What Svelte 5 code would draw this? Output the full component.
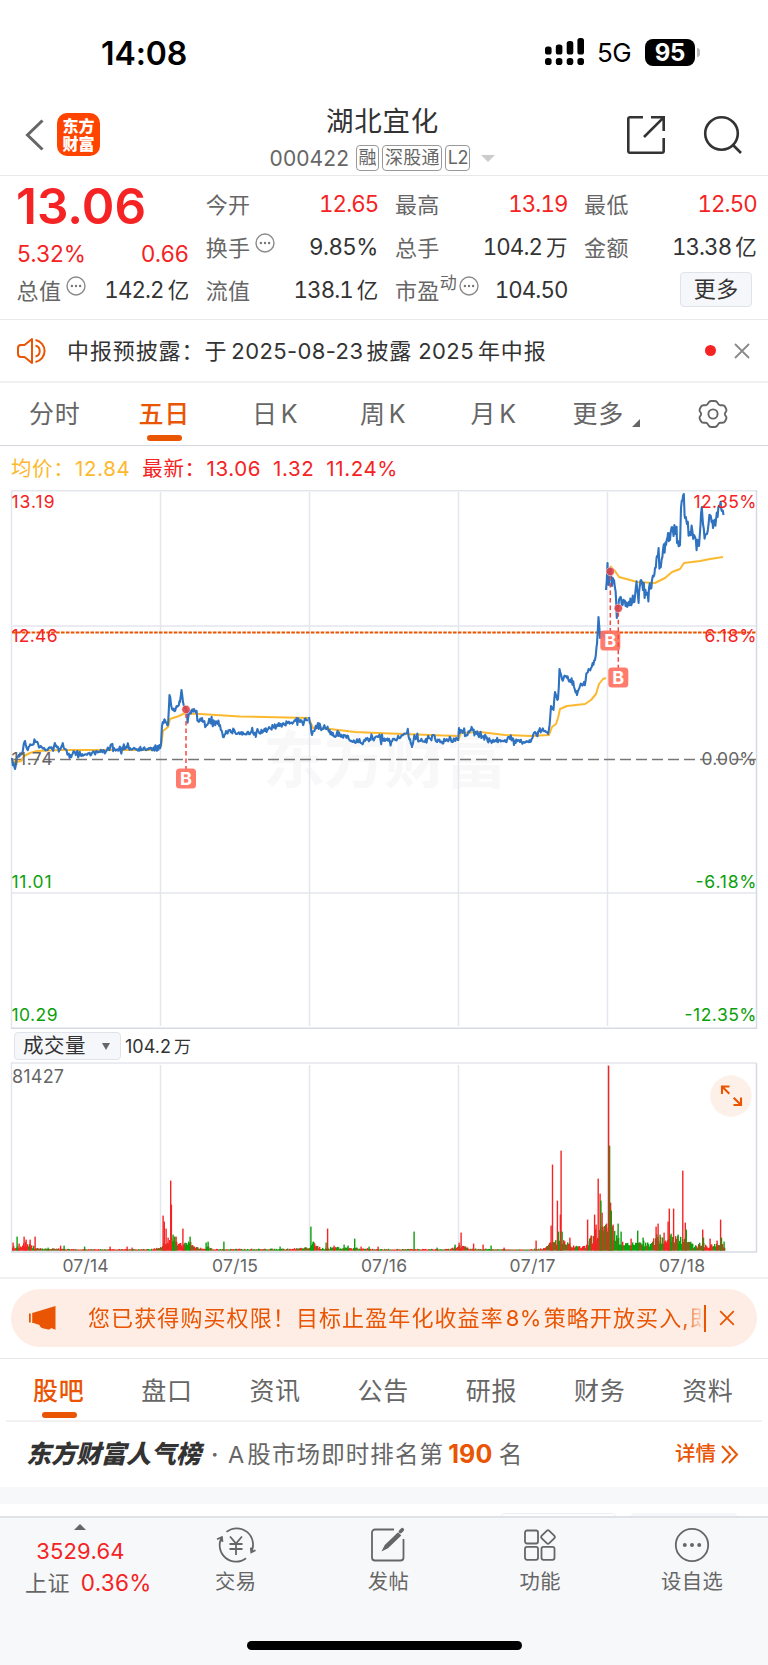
<script>
  let seed = 7;
  const rnd = () => {
    seed = (seed * 16807) % 2147483647;
    return seed / 2147483647;
  };

  // Closing price key points, one list per trading day
  const priceDays = [
    [[12,758],[15,769],[17,757],[22,754],[24,743],[25,741],[27,749],[32,745],[35,741],[40,747],[46,750],[50,748],[58,747],[65,749],[68,754],[75,752],[84,755],[92,753],[100,752],[107,750],[110,748],[115,750],[130,748],[145,749],[160,749]],
    [[160,749],[161,744],[162,726],[165,720],[168,725],[169.5,695],[172,709],[175,711],[178,706],[180,702],[181.5,690],[183,702],[186,710],[188,719],[190,712],[195,711],[198,721],[202,718],[206,726],[212,722],[220,725],[223,737],[226,731],[235,732],[245,734],[255,733],[265,731],[270,728],[280,725],[290,723],[295,720],[300,722],[308,720]],
    [[309,717],[312,735],[315,729],[318,723],[322,729],[328,729],[332,735],[340,736],[348,736],[353,742],[365,741],[378,737],[385,741],[395,740],[402,735],[407,733],[410,739],[412,747],[415,738],[425,742],[433,735],[437,742],[445,741],[457,740]],
    [[458,741],[459,728],[461,730],[466,735],[472,728],[475,732],[482,736],[490,741],[500,740],[510,739],[520,742],[530,742],[535,732],[542,730],[548,734],[550,720],[551,706],[553.5,710],[555,692],[558,699],[559.5,669],[562,679],[566,676],[570,680],[574,687],[577,695],[580,686],[584,682],[587,673],[591,668],[595,660],[597,644],[598.5,617],[600,638],[602,632],[605,640]],
    [[606,590],[607.5,563],[609,585],[610,568],[612,586],[614,580],[616,598],[617.5,611],[619,600],[621,598],[624,601],[628,605],[632,603],[635,596],[637,588],[639,593],[641,580],[643,590],[646,595],[649,588],[652,580],[655,568],[657,556],[660,567],[663,550],[666,545],[668,533],[670,540],[672,527],[675,529],[677,543],[680,545],[681,508],[683,496],[685,518],[687,524],[690,532],[695,537],[699,546],[701,514],[703,524],[707,534],[710,515],[713,528],[716,520],[719,506],[722,511],[723.5,515]]
  ];
  const noise = [2.6, 3, 3, 3, 7];

  const avgDays = [
    [[12,760],[16,762],[21,761],[24,756],[30,753],[37,751],[60,750],[158,750]],
    [[161,747],[163,731],[168,727],[170,719],[179,716],[184,713.5],[200,714],[240,716.5],[308,718]],
    [[309,719],[313,728],[330,729],[355,732],[390,733.5],[430,735],[457,736]],
    [[458,741],[461,733],[480,732],[505,735],[530,736],[549,735],[552,727],[556,724],[558,718],[560,709],[567,706],[585,704],[591,700],[596,694],[599,684],[603,679],[606,678]],
    [[610,566],[615,571],[619,577],[630,580],[637,582],[655,583],[665,578],[672,572],[680,569],[684,563],[700,561],[710,559],[723,557]]
  ];

  function at(keys, x) {
    for (let i = 1; i < keys.length; i++) {
      const [x0, y0] = keys[i - 1];
      const [x1, y1] = keys[i];
      if (x <= x1) return y0 + ((y1 - y0) * (x - x0)) / (x1 - x0);
    }
    return keys[keys.length - 1][1];
  }

  function wiggle(keys, amp) {
    const pts = [keys[0]];
    for (let i = 1; i < keys.length; i++) {
      const [x0] = keys[i - 1];
      const [x1, y1] = keys[i];
      for (let x = x0 + 0.8; x < x1 - 0.3; x += 0.8) {
        const big = rnd() < 0.18 ? 2 : 0.8;
        pts.push([x, at(keys, x) + (rnd() - 0.5) * amp * 2 * big]);
      }
      pts.push([x1, y1]);
    }
    return pts.map(([x, y]) => `${x.toFixed(1)},${y.toFixed(1)}`).join(' ');
  }

  const priceLines = priceDays.map((d, i) => wiggle(d, noise[i]));
  const avgLines = avgDays.map((d) => d.map((p) => p.join(',')).join(' '));

  // Background volume level, then the bars that stand out of it
  const volLevel = [[12,4],[16,5],[20,3],[24,8],[34,4],[42,2],[60,2],[80,1.2],[150,1.5],[160,3],[163,10],[168,10],[174,13],[178,6],[184,7],[189,9],[194,4],[204,2.5],[209,4],[214,1.5],[290,1.8],[306,3],[309,4],[312,9],[316,5],[322,2.5],[335,3.5],[360,2.5],[380,1.5],[450,1.5],[458,5],[464,4],[470,2],[495,1.5],[530,1.2],[546,3],[550,8],[556,10],[564,9],[572,5],[578,4],[585,4],[588,10],[593,14],[598,24],[604,22],[608,22],[612,22],[617,15],[622,8],[630,6],[640,10],[650,6],[656,14],[662,12],[668,14],[675,15],[684,14],[690,8],[695,4],[701,9],[708,4],[716,7],[724,6]];
  const peaks = [
    [13,8,'r'],[17,14,'g'],[19,7,'r'],[24,14,'r'],[26,11,'r'],[30,11,'r'],[35,14,'r'],[48,3,'g'],[60.5,5,'r'],[64,5,'g'],[84.5,4,'g'],[110,4,'r'],[127,4,'r'],[132,3,'r'],
    [163,35,'r'],[164.2,29,'r'],[166,22,'r'],[168,13,'r'],[171.3,46,'r'],[170.6,70,'r'],[173,16,'g'],[174.5,14,'g'],[176,14,'r'],[182.8,22,'r'],[185,8,'g'],[190,14,'g'],[206,8,'g'],[208,9,'g'],[223.8,9,'g'],[280,4,'g'],
    [310.8,24,'g'],[313,9,'g'],[326,8,'g'],[327.5,22,'r'],[334,5,'r'],[344,6,'g'],[348,5,'g'],[354.6,12,'g'],[361,4,'r'],[369,4,'g'],[378,4,'r'],[414,19,'g'],[437,3,'g'],
    [455,6,'g'],[459,8,'r'],[461,18,'r'],[473.5,7,'r'],[483,6,'r'],[491,5,'g'],[504,3,'r'],[536,10,'r'],[551,25,'r'],[552.4,86,'r'],[557.3,50,'r'],[558.3,19,'g'],[560.3,36,'r'],[561,100,'r'],[562,19,'g'],[569.8,13,'r'],[587.5,31,'r'],[591,15,'r'],[594.5,36,'r'],[596,26,'r'],[598.1,72,'r'],[600,57,'r'],[600.8,50,'g'],[602,38,'r'],[604,24,'r'],[606.5,27,'r'],[610.5,48,'r'],[611.2,40,'g'],[609.5,105,'g'],[608.5,185,'r'],[613,26,'r'],[618,27,'g'],[621,19,'g'],[631,12,'r'],[637.6,20,'g'],[643,13,'g'],[656,24,'r'],[658,27,'r'],[660,16,'g'],[664,18,'r'],[668,29,'r'],[669.2,42,'r'],[671,17,'g'],[673.5,42,'r'],[678,16,'g'],[682.7,80,'r'],[685.2,28,'r'],[686.2,21,'g'],[702.6,21,'r'],[703.4,13,'g'],[710,12,'r'],[717,10,'r'],[720.5,31,'r'],[721.4,13,'g'],[724,9,'g']
  ];
  // Stretches where selling dominates
  const heavyGreen = [[172, 178], [187, 192], [310, 318], [600, 605], [610, 652], [675, 694]];
  const BASE = 1250.6;
  const volBars = [];
  for (let x = 12.6; x < 725.5; x += 1) {
    const lv = at(volLevel, x);
    const green = heavyGreen.some(([a, b]) => x >= a && x <= b) ? 0.78 : 0.45;
    volBars.push([x, Math.max(1, lv * (0.45 + rnd() * 0.75)), rnd() < green ? 'g' : 'r']);
  }
  volBars.push(...peaks);

  const cols = [160.5, 309.5, 458.5, 607.5];
  const dates = [['07/14', 85.5], ['07/15', 235], ['07/16', 384], ['07/17', 532.5], ['07/18', 682]];
  const marks = [
    { x: 186, y: 709.5, by: 778 },
    { x: 610.3, y: 571.5, by: 640 },
    { x: 618.3, y: 608.3, by: 677 }
  ];
  const stats = [
    [{ k: '今开', v: '12.65', up: true }, { k: '换手', v: '9.85%', info: true, wide: true }, { k: '流值', v: '138.1', unit: '亿' }],
    [{ k: '最高', v: '13.19', up: true }, { k: '总手', v: '104.2', unit: '万' }, { k: '市盈', v: '104.50', info: true, sup: '动' }],
    [{ k: '最低', v: '12.50', up: true }, { k: '金额', v: '13.38', unit: '亿' }, { more: true }]
  ];
  const lower = ['股吧', '盘口', '资讯', '公告', '研报', '财务', '资料'];
</script>

{#snippet dots()}
  <svg class="dots" width="20" height="20" viewBox="0 0 20 20">
    <circle cx="10" cy="10" r="9" fill="none" stroke="#8b8b8b" stroke-width="1.4" />
    <g fill="#777"><circle cx="5.9" cy="10" r="1.2" /><circle cx="10" cy="10" r="1.2" /><circle cx="14.1" cy="10" r="1.2" /></g>
  </svg>
{/snippet}

<main>
  <div class="status">
    <span class="time">14:08</span>
    <svg class="signal" width="40" height="28" viewBox="0 0 40 28">
      <rect x="0" y="8.5" width="6.6" height="8" rx="2.6" /><rect x="10.8" y="6.5" width="6.6" height="10" rx="2.6" />
      <rect x="21.7" y="3" width="6.6" height="13.5" rx="2.6" /><rect x="32.4" y="0" width="6.6" height="16.5" rx="2.6" />
      {#each [0, 10.8, 21.7, 32.4] as x}<rect {x} y="20" width="6.6" height="7" rx="2.8" />{/each}
    </svg>
    <span class="net">5G</span>
    <span class="battery">95</span>
    <span class="nub"></span>
  </div>

  <header>
    <svg class="back" width="20" height="32" viewBox="0 0 20 32"><path d="M17.5 1.5 2.5 16l15 14.5" fill="none" stroke="#666" stroke-width="3" /></svg>
    <div class="logo"><span>东方</span><span>财富</span></div>
    <div class="title">
      <h1>湖北宜化</h1>
      <div class="sub"><span class="code">000422</span><i>融</i><i>深股通</i><i>L2</i><b></b></div>
    </div>
    <svg class="share" width="40" height="40" viewBox="0 0 40 40" fill="none" stroke="#333" stroke-width="2.6">
      <path d="M17 2.3H3.8a1.5 1.5 0 0 0-1.5 1.5v32.4a1.5 1.5 0 0 0 1.5 1.5h32.4a1.5 1.5 0 0 0 1.5-1.5V23" /><path d="M25 2.3h12.7V16M37.2 2.8 18 22" />
    </svg>
    <svg class="search" width="40" height="40" viewBox="0 0 40 40" fill="none" stroke="#333" stroke-width="2.6">
      <circle cx="18.5" cy="18.5" r="16.3" /><path d="m30 30 8 8" />
    </svg>
  </header>

  <section class="quote">
    <div class="col first">
      <div class="price">13.06</div>
      <div class="chg"><span>5.32%</span><span>0.66</span></div>
      <div class="row"><span class="k">总值</span>{@render dots()}<span class="v">142.2<u>亿</u></span></div>
    </div>
    {#each stats as col}
      <div class="col">
        {#each col as s}
          <div class="row">
            {#if s.more}
              <button>更多</button>
            {:else}
              <span class="k">{s.k}</span>{#if s.sup}<span class="sup">{s.sup}</span>{/if}{#if s.info}{@render dots()}{/if}
              <span class="v" class:up={s.up} class:wide={s.wide}>{s.v}{#if s.unit}<u>{s.unit}</u>{/if}</span>
            {/if}
          </div>
        {/each}
      </div>
    {/each}
  </section>

  <section class="notice">
    <svg width="32" height="28" viewBox="0 0 32 28" fill="none" stroke="#ea5504" stroke-width="2">
      <path d="M15 2v24L7.5 20H4a3 3 0 0 1-3-3v-6a3 3 0 0 1 3-3h3.5Z" stroke-linejoin="round" />
      <path d="M18.5 8.5a5.7 5.7 0 0 1 0 11M18.5 3a11.2 11.2 0 0 1 0 22" />
    </svg>
    <p>中报预披露：<span>于</span><span class="n">2025-08-23</span>披露<span class="n year">2025</span>年中报</p>
    <em></em>
    <svg class="x" width="16" height="16" viewBox="0 0 16 16" stroke="#8a8a8a" stroke-width="1.8"><path d="m1 1 14 14m0-14-14 14" /></svg>
  </section>

  <nav class="periods">
    <span>分时</span><span class="on">五日</span><span>日<u>K</u></span><span>周<u>K</u></span><span>月<u>K</u></span><span class="morep">更多<b></b></span>
    <svg width="32" height="30" viewBox="0 0 32 30" fill="none" stroke="#666" stroke-width="1.9" stroke-linejoin="round">
      <path d="M12 3Q13 2 14.5 2h3Q19 2 20 3l1.5 2.2q.7 1 2 1h2q1.7 0 2.4 1.3l1.2 2.2q.8 1.5 0 2.800l-.9 1.300q-.7 1.200 0 2.400l.9 1.300q.8 1.300 0 2.800l-1.200 2.200q-.7 1.300-2.400 1.300h-2q-1.300 0-2 1L20 27q-1 1-2.500 1h-3Q13 28 12 27l-1.500-2.200q-.7-1-2-1h-2q-1.700 0-2.400-1.300l-1.200-2.200q-.8-1.500 0-2.800l.9-1.300q.7-1.200 0-2.400l-.9-1.300q-.8-1.300 0-2.800l1.200-2.200q.7-1.300 2.400-1.300h2q1.300 0 2-1Z" />
      <circle cx="16" cy="15" r="4.6" />
    </svg>
  </nav>

  <div class="legend"><span class="avg">均价：<s>12.84</s></span><span>最新：<s>13.06</s></span><span>1.32</span><span>11.24%</span></div>

  <svg class="chart" width="768" height="540" viewBox="0 490 768 540">
    <text class="wm" x="263" y="783" textLength="244">东方财富</text>
    <g stroke="#e3e6ed" stroke-width="1.5" fill="none">
      <path d="M11.5 490.7H756.5M11.5 626H756.5M11.5 893H756.5" />
      {#each cols as x}<path d="M{x} 492V1026" />{/each}
      <path d="M11.5 490V1028" /><path d="M756.5 490V1028.3H11" stroke="#d7dae4" />
    </g>
    <path d="M12 759.5H756" stroke="#777" stroke-width="1.5" stroke-dasharray="11 5" />
    <path d="M12 632.5H756" stroke="#ea5504" stroke-width="1.9" stroke-dasharray="3.6 1.3" />
    {#each avgLines as p}<polyline points={p} fill="none" stroke="#fdb92e" stroke-width="2" stroke-linejoin="round" />{/each}
    {#each priceLines as p}<polyline points={p} fill="none" stroke="#2e72c0" stroke-width="2.1" stroke-linejoin="round" />{/each}
    {#each marks as m}
      <path d="M{m.x} {m.y + 4}V{m.by - 9}" stroke="#f5483c" stroke-width="1.5" stroke-dasharray="4.5 3" />
      <circle cx={m.x} cy={m.y} r="4.2" fill="#e04448" fill-opacity=".9" stroke="#fff" stroke-opacity=".5" />
      <rect x={m.x - 10} y={m.by - 9.5} width="20" height="20" rx="3.5" fill="#ff7262" fill-opacity=".93" />
      <text class="b" x={m.x} y={m.by + 7} text-anchor="middle">B</text>
    {/each}
    <g class="lab">
      <text class="r" x="11.5" y="508" textLength="43">13.19</text><text class="r" x="11.5" y="642" textLength="46">12.46</text>
      <text x="11.5" y="764.5" textLength="41">11.74</text><text class="g" x="11.5" y="887.5" textLength="40">11.01</text><text class="g" x="11.5" y="1020.7" textLength="46">10.29</text>
      <g text-anchor="end">
        <text class="r" x="756.5" y="508" textLength="63">12.35%</text><text class="r" x="756.5" y="642" textLength="52">6.18%</text><text x="756.5" y="764.5" textLength="55">0.00%</text>
        <text class="g" x="756.5" y="887.5" textLength="61">-6.18%</text><text class="g" x="756.5" y="1020.7" textLength="72">-12.35%</text>
      </g>
    </g>
  </svg>

  <div class="selector"><div class="pick">成交量<b></b></div><span>104.2<u>万</u></span></div>

  <div class="volume">
    <svg class="chart" width="768" height="214" viewBox="0 1062 768 214">
      <g stroke="#e3e6ed" stroke-width="1.5" fill="none">
        <path d="M11.5 1252V1063H756.5" />
        {#each cols as x}<path d="M{x} 1065V1250" />{/each}
        <path d="M756.5 1063V1252H11" stroke="#d7dae4" />
      </g>
      {#each volBars as [x, h, c]}<rect x={x - 0.6} y={BASE - h} width="1.4" height={h} fill={c === 'r' ? '#f52323' : '#0c9f0c'} />{/each}
      <g class="lab">
        <text x="12" y="1083" textLength="52" style:font-size="18px">81427</text>
        {#each dates as [d, x]}<text {x} y="1272" text-anchor="middle" textLength="46">{d}</text>{/each}
      </g>
    </svg>
    <svg class="expand" width="42" height="42" viewBox="0 0 42 42">
      <circle cx="21" cy="21" r="20.7" fill="#fdf0e9" />
      <path d="M12 19v-7.500h7.500M12.300 11.800l7 7M31 22.500V30h-7.500M30.700 29.700l-7-7" fill="none" stroke="#ea5504" stroke-width="2.100" />
    </svg>
  </div>

  <div class="bannerwrap">
    <div class="banner">
      <svg width="28" height="24" viewBox="0 0 28 24" fill="#ea5504"><path d="M0 7.500h1.800v9H0zM3.200 7v10H4.500l6 2q.5 3.500 7 4 3.500 1.500 4.500-1l4.500 1.800V0L5 6.500Z" /></svg>
      <p>您已获得购买权限！目标止盈年化收益率<span>8%</span>策略开放买入,即</p>
      <hr />
      <svg width="16" height="16" viewBox="0 0 16 16" stroke="#ea5504" stroke-width="1.8"><path d="m1.200 1.200 13.600 13.600m0-13.600L1.200 14.800" /></svg>
    </div>
  </div>

  <nav class="lower">
    {#each lower as t, i}<span class:on={i === 0}>{t}</span>{/each}
  </nav>

  <section class="rank">
    <strong>东方财富人气榜</strong><span class="dot">·</span><span class="desc"><u>A</u>股市场即时排名第</span><b>190</b><span class="desc">名</span>
    <a>详情<svg width="18" height="19" viewBox="0 0 18 19" fill="none" stroke="#ea5504" stroke-width="2"><path d="m1 1 8 8.500L1 18M8 1l8 8.500L8 18" /></svg></a>
  </section>
  <div class="band"></div>
  <div class="peek"><i></i><i></i></div>

  <footer>
    <div class="index">
      <b></b>
      <div class="pts">3529.64</div>
      <div class="line"><span>上证</span><em>0.36%</em></div>
    </div>
    <div class="tab">
      <svg width="40" height="36" viewBox="0 0 40 36" fill="none" stroke="#666" stroke-width="1.8">
        <path d="M10.500 4.900A16.300 16.300 0 0 1 35.300 24.900M30 31.200A16.300 16.300 0 0 1 5.700 10.500M1 12.300l4.900-2.300.6 4.800M39.500 23.300l-4.200 2-.5-4.600" />
        <path d="m14 9.500 6 7 6-7M13.500 17h13M13.500 22h13M20 16.500V28" />
      </svg>
      <span>交易</span>
    </div>
    <div class="tab">
      <svg width="36" height="36" viewBox="0 0 36 36" fill="none" stroke="#666" stroke-width="1.8">
        <path d="M24 2.500H5a3 3 0 0 0-3 3v25a3 3 0 0 0 3 3h25.500a3 3 0 0 0 3-3V12" />
        <path d="m13.500 22.500 2-4L28 6.500l2 2L17.500 20.500Z" fill="#666" /><path d="m30.500 4.500 1.800-1.800" stroke-width="3.600" stroke-linecap="round" />
      </svg>
      <span>发帖</span>
    </div>
    <div class="tab">
      <svg width="32" height="36" viewBox="0 0 32 36" fill="none" stroke="#666" stroke-width="1.8">
        <rect x="1" y="3.5" width="13" height="13" rx="2" /><rect x="1" y="19.8" width="13" height="13" rx="2" /><rect x="17.5" y="19.8" width="13" height="13" rx="2" />
        <rect x="18.7" y="4.7" width="10.6" height="10.6" rx="1.8" transform="rotate(45 24 10)" />
      </svg>
      <span>功能</span>
    </div>
    <div class="tab">
      <svg width="36" height="36" viewBox="0 0 36 36" fill="none" stroke="#666" stroke-width="1.8">
        <circle cx="18" cy="18" r="16.2" /><g fill="#666" stroke="none"><circle cx="10.8" cy="18" r="2" /><circle cx="18" cy="18" r="2" /><circle cx="25.2" cy="18" r="2" /></g>
      </svg>
      <span>设自选</span>
    </div>
    <div class="home"></div>
  </footer>
</main>

<style>
  :global(body) { margin: 0; background: #fff; }
  main { width: 768px; height: 1665px; overflow: hidden; background: #fff; color: #333; font-family: Inter, 'Noto Sans CJK SC', sans-serif; font-size: 22px; line-height: 1; white-space: nowrap; }
  * { box-sizing: border-box; }
  i, em { font-style: normal; }
  u, s, a { text-decoration: none; }
  p, h1 { margin: 0; font-weight: 400; }
  svg { flex: none; display: block; }

  .status { height: 104px; display: flex; align-items: center; padding-left: 101px; color: #000; }
  .time { font-size: 32px; font-weight: 600; width: 444px; letter-spacing: -0.1px; padding-top: 3px; }
  .net { font-size: 26px; margin-left: 12px; width: 48px; letter-spacing: -0.5px; padding-top: 2px; }
  .battery { width: 50px; height: 27px; border-radius: 8px; background: #000; color: #fff; font-size: 24px; line-height: 27px; font-weight: 700; text-align: center; letter-spacing: -0.2px; }
  .nub { width: 3px; height: 9px; margin-left: 2px; border-radius: 0 4px 4px 0; background: #bbb; }

  header { height: 72px; display: flex; align-items: flex-start; padding-left: 25px; border-bottom: 1.5px solid #e8e8e8; }
  .back { margin-top: 15px; }
  .logo { margin: 9px 0 0 12px; width: 43px; height: 43px; border-radius: 10px; background: #ff4400; color: #fff; font-weight: 900; font-size: 16px; display: flex; flex-direction: column; align-items: center; justify-content: center; gap: 2px; }
  .title { width: 527px; padding-left: 38px; display: flex; flex-direction: column; align-items: center; }
  h1 { font-size: 27.5px; line-height: 32px; letter-spacing: 0.8px; padding-top: 1px; }
  .sub { display: flex; align-items: center; height: 26px; margin-top: 8px; color: #666; }
  .code { font-size: 21px; letter-spacing: 0.1px; margin-right: 7px; }
  .sub i { height: 26px; line-height: 23px; border: 1.5px solid #999; border-radius: 4px; padding: 0 1.5px; margin-right: 3px; font-size: 18px; letter-spacing: 0.3px; }
  .sub i:nth-of-type(3) { letter-spacing: -0.5px; }
  .sub b { margin-left: 8px; border: 7px solid transparent; border-top-color: #ccc; border-bottom: 0; }
  .share { margin: 11px 0 0 -1px; }
  .search { margin: 11px 0 0 36.5px; }

  .quote { height: 144px; padding: 7px 12px 0 17px; display: grid; grid-template-columns: repeat(4, 171.7px); column-gap: 17.5px; border-bottom: 1.5px solid #e8e8e8; }
  .row { height: 43px; display: flex; align-items: center; }
  .k { color: #666; font-size: 22px; letter-spacing: 0.4px; margin-left: -0.5px; }
  .v { margin-left: auto; font-size: 22.3px; font-variant-numeric: tabular-nums; letter-spacing: -0.9px; margin-right: -0.5px; }
  .v.wide { font-variant-numeric: normal; font-size: 22.5px; letter-spacing: 0; }
  .v u { margin-left: 4px; font-size: 21.5px; letter-spacing: 0; }
  .up, .price, .chg { color: #f52323; }
  .price { height: 47px; line-height: 47px; font-size: 49.5px; font-weight: 600; letter-spacing: 0; margin-left: -1px; }
  .chg { height: 39px; display: flex; justify-content: space-between; align-items: center; padding-top: 9px; font-size: 22.6px; }
  .dots { margin: -9px 0 0 4.5px; }
  .sup { font-size: 17px; color: #666; margin: -14px -2px 0 0; }
  button { margin-left: auto; margin-right: 4px; width: 72px; height: 35px; margin-top: -3px; border: 1.5px solid #dfe3ea; border-radius: 4px; background: #f6f7fa; color: #333; font: 22px/30px Inter, 'Noto Sans CJK SC', sans-serif; padding: 0; letter-spacing: 0.5px; }

  .notice { height: 63px; display: flex; align-items: center; padding-left: 17px; border-bottom: 2px solid #f0f0f0; }
  .notice p { margin-left: 18px; width: 638px; font-size: 22px; letter-spacing: 0.9px; }
  .notice .n { letter-spacing: 0.4px; margin: 0 3px 0 4px; }
  .notice .year { margin-left: 6px; letter-spacing: 0.4px; margin-right: 4px; }
  .notice em { width: 11px; height: 11px; border-radius: 50%; background: #f52323; }
  .x { margin-left: 18px; }

  .periods { height: 63px; display: flex; align-items: center; border-bottom: 1.5px solid #d5d8e0; color: #666; font-size: 25px; padding: 1px 0 0 29px; }
  .periods span { width: 110.5px; letter-spacing: 0.7px; position: relative; }
  .periods span:nth-child(2) { left: -1px; }
  .periods span:nth-child(3) { width: 108px; margin-left: 2px; }
  .periods span:nth-child(5) { width: 102px; }
  .periods u { margin-left: 3px; }
  .periods .morep { width: 124px; display: flex; align-items: flex-end; }
  .morep b { margin: 0 0 0 8px; border-left: 8px solid transparent; border-bottom: 8px solid #666; }
  .periods svg { margin-top: -1px; }
  .on { color: #ea5504; font-weight: 500; }
  .periods .on::after { content: ''; position: absolute; left: 8px; top: 33px; width: 35px; height: 6px; border-radius: 3px; background: #ea5504; }

  .legend { height: 44px; display: flex; align-items: center; padding: 2px 0 0 11px; color: #f52323; font-size: 20.5px; gap: 12px; letter-spacing: 0.6px; }
  .legend .avg { color: #fdb92e; }
  .legend s { margin-left: 0.8px; }
  .wm { font-size: 62px; font-weight: 700; fill: #f8f8f8; }
  .lab { font-size: 17.5px; fill: #666; }
  .r { fill: #f52323; }
  .g { fill: #0c9f0c; }
  .b { fill: #fff; font-size: 18px; font-weight: 700; }

  .selector { height: 32px; display: flex; align-items: center; padding: 0 0 1px 14px; font-size: 18px; }
  .pick { width: 107px; height: 28px; border: 1.5px solid #e0e3ea; border-radius: 4px; background: #f6f7fa; font-size: 20.5px; display: flex; align-items: center; padding: 1px 0 0 8px; letter-spacing: 0.5px; margin-right: 4px; }
  .pick b { margin-left: 16px; border: 4.5px solid transparent; border-top: 7px solid #666; border-bottom: 0; }
  .selector > span { padding-top: 2px; }
  .selector u { margin-left: 3px; font-size: 17px; }
  .volume { position: relative; height: 217px; border-bottom: 2px solid #f0f0f0; }
  .expand { position: absolute; left: 710px; top: 13px; }

  .bannerwrap { height: 80px; padding: 10px 11px 0; border-bottom: 1.5px solid #e8e8e8; }
  .banner { height: 58px; border-radius: 29px; background: #fdede4; color: #ea5504; display: flex; align-items: center; padding-left: 18px; }
  .banner p { margin-left: 31px; width: 616px; overflow: hidden; line-height: 32px; font-size: 22px; letter-spacing: 1.1px; -webkit-mask-image: linear-gradient(90deg, #000 595px, transparent 617px); mask-image: linear-gradient(90deg, #000 595px, transparent 617px); }
  .banner p span { margin: 0 2px; letter-spacing: 0.3px; }
  hr { width: 1.5px; height: 27px; border: 0; margin: 0 13.5px 0 0; background: #ea5504; }

  .lower { height: 63px; margin: 0 6px; padding: 3px 0 0 27px; display: flex; align-items: center; border-bottom: 2px solid #f2f2f2; font-size: 25px; color: #666; }
  .lower span { width: 108.2px; letter-spacing: 0.7px; position: relative; flex: none; }
  .lower .on::after { content: ''; position: absolute; left: 9px; top: 33px; width: 35px; height: 6px; border-radius: 3px; background: #ea5504; }

  .rank { height: 65px; display: flex; align-items: center; padding: 0 0 0 26px; color: #666; font-size: 23.5px; }
  .rank strong { color: #333; font-weight: 900; font-size: 25px; font-style: italic; width: 185px; }
  .rank .dot { width: 17px; font-weight: 600; }
  .desc { letter-spacing: 1.1px; }
  .desc u { margin-right: 2px; }
  .rank b { color: #ea5504; font-weight: 700; font-size: 25px; margin: 0 6px 0 4px; letter-spacing: 0.2px; }
  .rank a { margin-left: auto; margin-right: 29px; display: flex; align-items: center; gap: 5px; color: #ea5504; font-size: 20.5px; font-weight: 500; }
  .band { height: 17px; background: #f7f8fa; }
  .peek { height: 12px; padding: 9px 0 0 500px; display: flex; gap: 13px; overflow: hidden; }
  .peek i { width: 117px; height: 8px; border: 1.5px solid #eceef3; border-radius: 5px 5px 0 0; }
  .peek i + i { width: 108px; background: #f6f7fa; border: 0; }

  footer { height: 149px; background: #f7f8fa; border-top: 2px solid #e0e2e7; display: flex; position: relative; color: #666; }
  .index { width: 161px; display: flex; flex-direction: column; align-items: center; padding-top: 6px; }
  .index b { border: 6.5px solid transparent; border-bottom-color: #666; border-top: 0; }
  .pts { color: #f52323; font-size: 22px; margin-top: 10px; letter-spacing: 0.2px; }
  .line { display: flex; align-items: center; gap: 11px; margin-top: 9.5px; padding-left: 16px; font-size: 22px; letter-spacing: 0.3px; }
  .line em { color: #f52323; font-size: 22.5px; }
  .tab { width: 152px; display: flex; flex-direction: column; align-items: center; padding-top: 9px; }
  .tab:nth-child(2) { margin-left: -1px; margin-right: 1px; }
  .tab span { font-size: 20.3px; margin-top: 8.5px; letter-spacing: 0.4px; }
  .home { position: absolute; left: 246.5px; top: 122.5px; width: 275px; height: 9px; border-radius: 5px; background: #000; }
</style>
